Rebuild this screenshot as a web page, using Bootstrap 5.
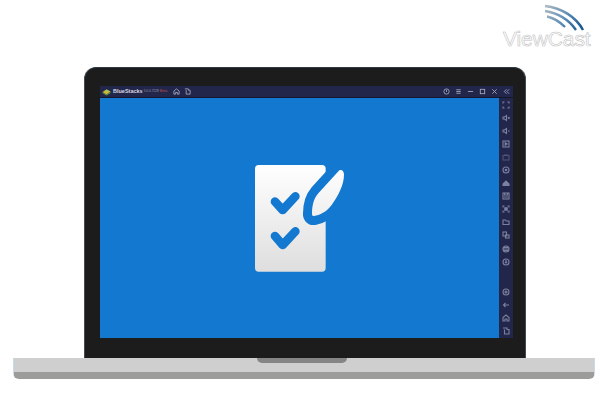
<!DOCTYPE html>
<html lang="en">
<head>
  <meta charset="UTF-8" />
  <meta name="viewport" content="width=device-width, initial-scale=1.0"/>
  <title>BlueStacks on ViewCast</title>
  <link rel="stylesheet" href="https://cdn.jsdelivr.net/npm/bootstrap@5.3.0/dist/css/bootstrap.min.css"/>
  <style>
    body { background: #fff; width: 602px; height: 414px; overflow: hidden; position: relative; font-family: "Liberation Sans", Arial, sans-serif; }
    .vc-logo { position: absolute; left: 500px; top: 4px; width: 96px; height: 46px; }
    .vc-logo svg { position: absolute; left: 0; top: 0; }
    .vc-name { position: absolute; left: 3px; top: 23px; font-size: 21px; line-height: 24px; letter-spacing: -0.1px; color: #fff; -webkit-text-stroke: 0.6px #c2c2c2; white-space: nowrap; }
    .stage { padding-top: 67px; }
    .lid { width: 442px; height: 291px; margin-left: 84px; padding: 18px 12px 0 15px; background: #1c1c1c; border-radius: 12px 12px 0 0; border-left: 1px solid #3f4c58; border-right: 1px solid #3f4c58; border-top: 1px solid #2f3a44; }
    .topbar { height: 12px; background: #23264b; padding: 0 3.5px 0 2px; color: #c9cbd8; border-bottom: 1px solid #14162c; }
    .app-logo { width: 9px; height: 8px; margin-right: 2px; }
    .app-name { font-size: 5.5px; font-weight: 700; line-height: 11px; color: #d5d7e2; }
    .app-ver { font-size: 3.2px; line-height: 11px; margin-left: 1px; color: #9a9cb0; }
    .app-beta { font-size: 3.6px; line-height: 11px; margin-left: 1px; color: #c0504d; }
    .bar-ic { width: 7px; height: 7px; fill: none; stroke: #a4a7ba; stroke-width: 1; flex: none; }
    .bar-right { gap: 5px; }
    .home-ic { margin-left: 6px; }
    .copy-ic { margin-left: 4px; }
    .screen-row { height: 240px; }
    .screen { width: 399px; background: #1278d0; }
    .task-icon { margin-bottom: 1px; }
    .sidebar { width: 14px; background: #23264b; padding-top: 0; }
    .side-ic { width: 14px; height: 13.1px; }
    .side-ic svg { width: 8px; height: 8px; fill: none; stroke: #7c809e; stroke-width: 1.1; }
    .base { width: 582px; height: 21px; margin-left: 13px; background: #cfcfcf; border-left: 1px solid #c4dbec; border-right: 1px solid #c4dbec; border-bottom: 7px solid #9c9c9a; border-radius: 0 0 6px 6px; }
    .notch { width: 90px; height: 5px; margin-left: 243px; background: #858585; border-radius: 0 0 7px 7px; }
  </style>
</head>
<body>
  <!-- ViewCast logo -->
  <div class="vc-logo">
    <svg width="96" height="30" viewBox="0 0 96 30" fill="none">
      <defs>
        <linearGradient id="arcs" gradientUnits="userSpaceOnUse" x1="45" y1="3" x2="80" y2="26">
          <stop offset="0" stop-color="#aeb9c2"/>
          <stop offset="0.55" stop-color="#5b8db5"/>
          <stop offset="1" stop-color="#17578f"/>
        </linearGradient>
      </defs>
      <path d="M45 2C62 4 76 13 83 26" stroke="url(#arcs)" stroke-width="2.400"/>
      <path d="M45 7C58 9 69 16 76 26" stroke="url(#arcs)" stroke-width="2.400"/>
      <path d="M47 12.500C54 14 60 18 65 23" stroke="url(#arcs)" stroke-width="2.400"/>
    </svg>
    <div class="vc-name">ViewCast</div>
  </div>

  <div class="stage">
    <div class="lid">
      <div class="topbar d-flex align-items-center">
        <svg class="app-logo" viewBox="0 0 18 16">
          <path d="M1 8 9 3l8 4-8 6z" fill="#d9b23a"/>
          <path d="M1 8l8 5 8-6v3l-8 5-8-5z" fill="#5f9e3c"/>
          <path d="M5 6l4-3 6 3-5 2z" fill="#9ccb4a"/>
        </svg>
        <span class="app-name">BlueStacks</span>
        <span class="app-ver">5.0.0.7228</span>
        <span class="app-beta">Beta</span>
        <svg class="bar-ic home-ic" viewBox="0 0 8 8"><path d="M1 7V3.500L4 1l3 2.500V7H5V5H3v2z"/></svg>
        <svg class="bar-ic copy-ic" viewBox="0 0 8 8"><path d="M1 1h4v1.500h2V7H2.500V2.500"/></svg>
        <div class="ms-auto d-flex align-items-center bar-right">
          <svg class="bar-ic" viewBox="0 0 8 8"><circle cx="4" cy="4" r="3"/><path d="M4 2v2.500"/></svg>
          <svg class="bar-ic" viewBox="0 0 8 8"><path d="M1.500 2h5M1.500 4h5M1.500 6h5"/></svg>
          <svg class="bar-ic" viewBox="0 0 8 8"><path d="M1 4h6"/></svg>
          <svg class="bar-ic" viewBox="0 0 8 8"><rect x="1.500" y="1.500" width="5" height="5"/></svg>
          <svg class="bar-ic" viewBox="0 0 8 8"><path d="M1.500 1.500l5 5M6.500 1.500l-5 5"/></svg>
          <svg class="bar-ic" viewBox="0 0 8 8"><path d="M4 1.500 1.500 4 4 6.500M7 1.500 4.500 4 7 6.500"/></svg>
        </div>
      </div>
      <div class="screen-row d-flex">
        <div class="screen d-flex align-items-center justify-content-center">
          <svg class="task-icon" width="120" height="125" viewBox="0 0 360 375">
            <defs>
              <linearGradient id="paper" gradientUnits="userSpaceOnUse" x1="0" y1="30" x2="0" y2="350">
                <stop offset="0" stop-color="#ffffff"/>
                <stop offset="1" stop-color="#dedede"/>
              </linearGradient>
            </defs>
            <rect x="45" y="30" width="212" height="320" rx="11" fill="url(#paper)"/>
            <!-- nib with its blue surround -->
            <path d="M298 46Q310 42 312 58C312 90 296 120 275 150C258 172 240 180 222 183Q215 184 216 176C216 150 222 130 235 115Z" fill="#1278d0" stroke="#1278d0" stroke-width="54" stroke-linejoin="round"/>
            <path d="M298 46Q310 42 312 58C312 90 296 120 275 150C258 172 240 180 222 183Q215 184 216 176C216 150 222 130 235 115Z" fill="url(#paper)"/>
            <path d="M105 140l23 25 38-41" fill="none" stroke="#1278d0" stroke-width="26" stroke-linecap="round" stroke-linejoin="round"/>
            <path d="M105 243l23 27 38-41" fill="none" stroke="#1278d0" stroke-width="26" stroke-linecap="round" stroke-linejoin="round"/>
          </svg>
        </div>
        <div class="sidebar d-flex flex-column">
          <div class="side-ic d-flex align-items-center justify-content-center"><svg viewBox="0 0 8 8"><path d="M1 2.500V1h1.500M5.500 1H7v1.500M7 5.500V7H5.500M2.500 7H1V5.500"/></svg></div>
          <div class="side-ic d-flex align-items-center justify-content-center"><svg viewBox="0 0 8 8"><path d="M1 3h1.500L4.500 1.500v5L2.500 5H1zM6 3l1.500 2M7.500 3 6 5"/></svg></div>
          <div class="side-ic d-flex align-items-center justify-content-center"><svg viewBox="0 0 8 8"><path d="M1 3h1.500L4.500 1.500v5L2.500 5H1zM6 4h1.500"/></svg></div>
          <div class="side-ic d-flex align-items-center justify-content-center"><svg viewBox="0 0 8 8"><rect x="1" y="1" width="6" height="6"/><path d="M3.200 2.700 5.200 4 3.200 5.300z" fill="#7c809e"/></svg></div>
          <div class="side-ic d-flex align-items-center justify-content-center opacity-50"><svg viewBox="0 0 8 8"><rect x="1" y="2.500" width="6" height="4.500"/><path d="M3 2.500V1M5 2.500V1"/></svg></div>
          <div class="side-ic d-flex align-items-center justify-content-center"><svg viewBox="0 0 8 8"><circle cx="4" cy="4" r="3"/><circle cx="4" cy="4" r="0.800" fill="#7c809e"/></svg></div>
          <div class="side-ic d-flex align-items-center justify-content-center"><svg viewBox="0 0 8 8"><path d="M1 6.500V5l3-3 3 3v1.500z" fill="#7c809e"/></svg></div>
          <div class="side-ic d-flex align-items-center justify-content-center"><svg viewBox="0 0 8 8"><rect x="1" y="1" width="6" height="6"/><path d="M2.500 1v2h3V1M2 5h4"/></svg></div>
          <div class="side-ic d-flex align-items-center justify-content-center"><svg viewBox="0 0 8 8"><path d="M1 2.500V1h1.500M5.500 1H7v1.500M7 5.500V7H5.500M2.500 7H1V5.500"/><rect x="2.800" y="2.800" width="2.400" height="2.400" fill="#7c809e"/></svg></div>
          <div class="side-ic d-flex align-items-center justify-content-center"><svg viewBox="0 0 8 8"><path d="M1 2h2.500l.7 1H7v3.500H1z"/></svg></div>
          <div class="side-ic d-flex align-items-center justify-content-center"><svg viewBox="0 0 8 8"><rect x="1" y="1" width="3.500" height="4"/><rect x="3.500" y="4" width="3.500" height="3"/></svg></div>
          <div class="side-ic d-flex align-items-center justify-content-center"><svg viewBox="0 0 8 8"><circle cx="4" cy="4" r="3"/><path d="M1 4h6M2 2.500h4M2 5.500h4"/></svg></div>
          <div class="side-ic d-flex align-items-center justify-content-center"><svg viewBox="0 0 8 8"><circle cx="4" cy="4" r="3"/><path d="M4 2v3M3 4l1 1 1-1"/></svg></div>
          <div class="flex-grow-1"></div>
          <div class="side-ic d-flex align-items-center justify-content-center"><svg viewBox="0 0 8 8"><circle cx="4" cy="4" r="3"/><circle cx="4" cy="4" r="1"/></svg></div>
          <div class="side-ic d-flex align-items-center justify-content-center"><svg viewBox="0 0 8 8"><path d="M7 4H1.500M3.500 2 1.500 4l2 2"/></svg></div>
          <div class="side-ic d-flex align-items-center justify-content-center"><svg viewBox="0 0 8 8"><path d="M1 7V3.500L4 1l3 2.500V7H5V5H3v2z"/></svg></div>
          <div class="side-ic d-flex align-items-center justify-content-center"><svg viewBox="0 0 8 8"><path d="M1 1h4v1.500h2V7H2.500V2.500"/></svg></div>
        </div>
      </div>
    </div>
    <div class="base">
      <div class="notch"></div>
    </div>
  </div>
</body>
</html>
